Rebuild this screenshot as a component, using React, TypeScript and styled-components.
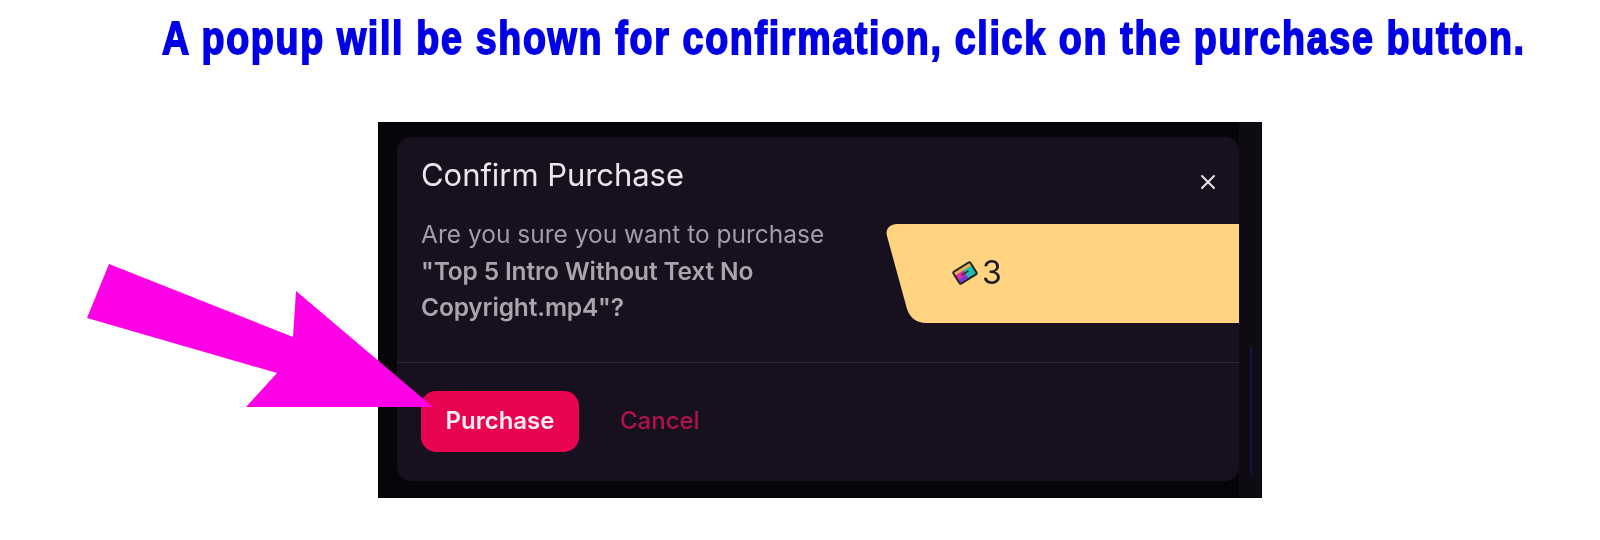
import React from "react";
import styled, { createGlobalStyle } from "styled-components";

const Global = createGlobalStyle`
  html, body { margin: 0; padding: 0; background: #ffffff; overflow: hidden; }
  body { font-family: "Inter", "Liberation Sans", sans-serif; }
`;

const Page = styled.div`
  position: relative;
  width: 1600px;
  height: 540px;
  display: flex;
  flex-direction: column;
  background: #ffffff;
  overflow: hidden;
`;

const Heading = styled.h1`
  margin: 0;
  height: 122px;
  padding: 11px 0 0 162px;
  box-sizing: border-box;
  font-family: "Liberation Sans", Arial, sans-serif;
  font-size: 47px;
  line-height: 54px;
  font-weight: 700;
  letter-spacing: 2.1px;
  color: #0000e6;
  white-space: nowrap;
  -webkit-text-stroke: 1.8px #0000e6;
  transform: scaleX(0.8);
  transform-origin: 162px 0;
`;

const Frame = styled.section`
  margin-left: 378px;
  width: 884px;
  height: 376px;
  display: flex;
  background: #060509;
  filter: blur(0.45px);
`;

const Dialog = styled.div`
  width: 842px;
  margin: 15px 0 17px 19px;
  display: flex;
  flex-direction: column;
  background: #17101e;
  border-radius: 14px;
`;

const Header = styled.header`
  height: 87px;
  box-sizing: border-box;
  display: flex;
  align-items: flex-start;
  justify-content: space-between;
  padding: 18px 22px 0 24px;
`;

const Title = styled.h2`
  margin: 0;
  font-size: 31px;
  line-height: 40px;
  font-weight: 400;
  letter-spacing: -0.05px;
  color: #e9e6ec;
`;

const Close = styled.button`
  margin-top: 18px;
  width: 18px;
  height: 18px;
  padding: 0;
  border: 0;
  background: none;
  color: #e6e3ea;
  display: flex;
`;

const Body = styled.div`
  height: 139px;
  display: flex;
  justify-content: space-between;
  box-sizing: border-box;
  padding-left: 24px;
  border-bottom: 1px solid #2e2836;
`;

const Message = styled.p`
  margin: -8px 0 0;
  width: 430px;
  font-size: 24.5px;
  line-height: 36.5px;
  font-weight: 400;
  color: #a19da8;
`;

const FileName = styled.strong`
  font-weight: 600;
  letter-spacing: -0.15px;
  color: #a8a5ad;
`;

const Ticket = styled.div`
  width: 353px;
  height: 99px;
  display: flex;
  align-items: center;
  gap: 3px;
  padding: 0 0 2px 65px;
  box-sizing: border-box;
  background: #ffd37f;
  clip-path: path("M11 0 H353 V99 H40 C 31 99 24 94 21 85 L1 12 C -1 5 4 0 11 0 Z");
  font-size: 32px;
  line-height: 36px;
  color: #1d1a1c;
`;

const Footer = styled.footer`
  flex: 1;
  display: flex;
  align-items: flex-start;
  gap: 41px;
  padding: 28px 0 0 24px;
`;

const Purchase = styled.button`
  width: 158px;
  height: 61px;
  padding: 0 0 2px;
  border: 0;
  border-radius: 15px;
  background: #e8044f;
  color: #f8eef2;
  font-family: inherit;
  font-size: 24px;
  font-weight: 600;
`;

const Cancel = styled.button`
  height: 61px;
  padding: 0 0 2px;
  border: 0;
  background: none;
  color: #b0124a;
  font-family: inherit;
  font-size: 24px;
  font-weight: 500;
`;

const SideStrip = styled.div`
  flex: 1;
  display: flex;
  justify-content: center;
  padding: 225px 0 24px;
  background: #0e0b12;
`;

const SideLine = styled.div`
  width: 2px;
  background: #14144a;
`;

const Arrow = styled.svg`
  position: absolute;
  left: 0;
  top: 0;
  width: 500px;
  height: 460px;
  pointer-events: none;
`;

const TicketIcon = () => (
  <svg width="28" height="28" viewBox="0 0 28 28" aria-hidden="true">
    <g transform="rotate(-32 14 14)">
      <rect x="3" y="6" width="22" height="16" rx="2.5" fill="#24261f" />
      <rect x="5" y="8" width="9" height="12" fill="#e02ab0" />
      <rect x="14" y="8" width="9" height="12" fill="#22bdb2" />
      <rect x="5" y="8" width="18" height="3" fill="#e8b04a" />
      <rect x="5" y="16.5" width="9" height="3.5" fill="#6a3fd0" />
      <path d="M10 14 h8" stroke="#20302c" strokeWidth="1.7" fill="none" />
    </g>
  </svg>
);

export default function App() {
  return (
    <Page>
      <Global />
      <Heading>A popup will be shown for confirmation, click on the purchase button.</Heading>
      <Frame>
        <Dialog>
          <Header>
            <Title>Confirm Purchase</Title>
            <Close aria-label="Close">
              <svg width="18" height="18" viewBox="0 0 18 18" fill="none" stroke="currentColor" strokeWidth="2" strokeLinecap="round">
                <path d="M3 3 L15 15 M15 3 L3 15" />
              </svg>
            </Close>
          </Header>
          <Body>
            <Message>
              Are you sure you want to purchase <FileName>"Top 5 Intro Without Text No Copyright.mp4"?</FileName>
            </Message>
            <Ticket>
              <TicketIcon />
              <span>3</span>
            </Ticket>
          </Body>
          <Footer>
            <Purchase>Purchase</Purchase>
            <Cancel>Cancel</Cancel>
          </Footer>
        </Dialog>
        <SideStrip>
          <SideLine />
        </SideStrip>
      </Frame>
      <Arrow viewBox="0 0 500 460" aria-hidden="true">
        <polygon points="109,264 87,318 277,373 246,407 433,407 296,291 293,337" fill="#ff00e6" />
      </Arrow>
    </Page>
  );
}
